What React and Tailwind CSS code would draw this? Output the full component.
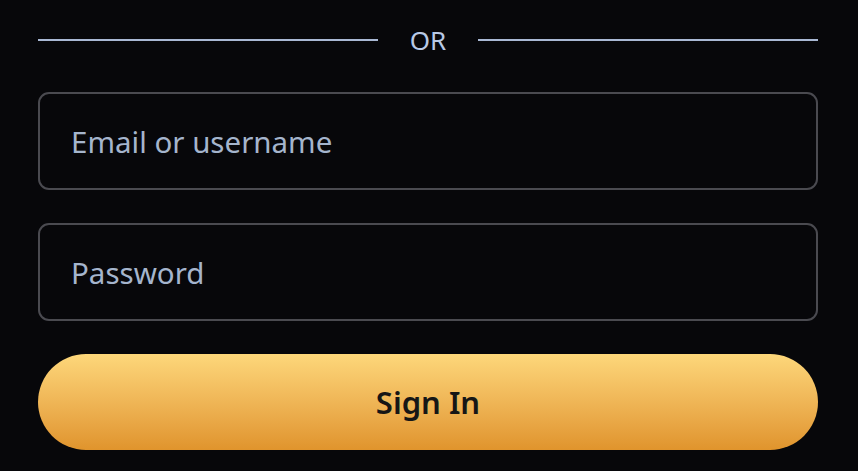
export default function App() {
  return (
    <div className="min-h-screen w-full bg-[#07070a] pl-[38px] pr-[40px] pt-[24px] font-['Noto_Sans','Open_Sans',sans-serif]">
      {/* divider */}
      <div className="flex items-center gap-[32px] h-[32px]">
        <div className="h-[2px] flex-1 bg-[#a9b8d4]" />
        <span className="text-[26px] leading-[32px] text-[#b8c9e6]">OR</span>
        <div className="h-[2px] flex-1 bg-[#a9b8d4]" />
      </div>

      <form className="mt-[36px] flex flex-col gap-[33px]" onSubmit={(e) => e.preventDefault()}>
        <input
          type="text"
          placeholder="Email or username"
          className="h-[98px] w-full rounded-[11px] border-2 border-[#4a4a50] bg-transparent px-[31px] text-[29.5px] text-white outline-none placeholder:text-[#a5b5cd]"
        />
        <input
          type="password"
          placeholder="Password"
          className="h-[98px] w-full rounded-[11px] border-2 border-[#4a4a50] bg-transparent px-[31px] text-[29.5px] text-white outline-none placeholder:text-[#a5b5cd]"
        />
        <button
          type="submit"
          className="h-[96px] w-full rounded-full bg-gradient-to-b from-[#fdd77a] to-[#e0942c] text-[31px] font-semibold text-[#161616]"
        >
          Sign In
        </button>
      </form>
    </div>
  );
}
